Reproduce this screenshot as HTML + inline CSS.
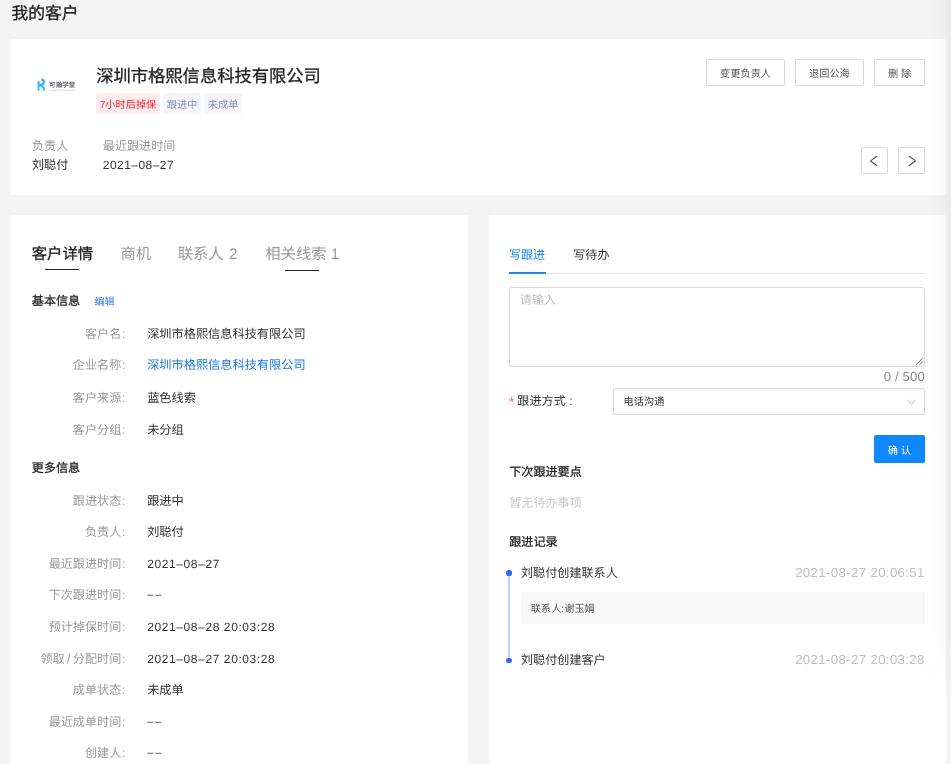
<!DOCTYPE html>
<html lang="zh-CN">
<head>
<meta charset="utf-8">
<title>我的客户</title>
<style>
*{box-sizing:border-box;margin:0;padding:0}
html,body{width:951px;height:764px;overflow:hidden;background:#f4f4f4}
body{position:relative;font-family:"Liberation Sans",sans-serif;color:#333;-webkit-font-smoothing:antialiased;text-rendering:geometricPrecision}
.a{position:absolute;white-space:nowrap}
.card{position:absolute;background:#fff;border-radius:2px}
/* generic text helper: t = vertically centred line */
.t{position:absolute;white-space:nowrap;height:20px;line-height:20px}
.btn{position:absolute;height:26.5px;top:59.2px;border:1px solid #d9d9d9;border-radius:2px;background:#fff;font-size:10.2px;color:#555;text-align:center;line-height:24.5px;padding-top:3.3px;overflow:hidden;white-space:nowrap}
.tag{position:absolute;top:93px;height:20.8px;line-height:20.8px;padding-top:3px;overflow:hidden;font-size:10.2px;border-radius:2px;text-align:center;white-space:nowrap}
.lab{position:absolute;right:825.7px;white-space:nowrap;font-size:12.1px;color:#999;height:20px;line-height:20px;text-align:right}
.val{position:absolute;left:147.2px;white-space:nowrap;font-size:12.2px;color:#333;height:20px;line-height:20px}
.num{font-size:12px;letter-spacing:.6px}
.dd{font-size:11px;letter-spacing:2px}
.ts{font-size:13.2px;color:#bfbfbf;letter-spacing:.38px}
.lab i{font-style:normal;margin-left:.7px}
</style>
</head>
<body>
<div id="root" style="position:absolute;left:0;top:0;width:951px;height:764px;will-change:transform">
<!-- page title -->
<div class="t" style="left:11.4px;top:3.8px;font-size:16.8px;color:#222;-webkit-text-stroke:.3px #222">我的客户</div>

<!-- header card -->
<div class="card" style="left:11px;top:39px;width:935px;height:156px"></div>


<!-- logo -->
<svg class="a" style="left:36px;top:77px" width="42" height="16" viewBox="0 0 42 16">
  <defs><linearGradient id="lg" gradientUnits="userSpaceOnUse" x1="0" y1="2" x2="0" y2="14"><stop offset="0" stop-color="#1a9cf3"/><stop offset="1" stop-color="#3acbff"/></linearGradient></defs>
  <path d="M2.55 4.3 V13.7" stroke="url(#lg)" stroke-width="2" fill="none"/>
  <path d="M5.6 2.3 C8.6 3.4 9.2 7.4 3.6 8.5 C7 8.7 8 10.8 8.1 13.7" stroke="url(#lg)" stroke-width="2.1" stroke-linecap="butt" stroke-linejoin="round" fill="none"/>
  <text x="13.1" y="9.7" font-family="Liberation Sans, sans-serif" font-size="6.4" font-weight="700" fill="#6c6c82" textLength="26" lengthAdjust="spacing">可瀚学堂</text>
  <text x="13.2" y="13.7" font-family="Liberation Sans, sans-serif" font-size="2.7" fill="#b8b8c2" textLength="25.6" lengthAdjust="spacingAndGlyphs">KEHAN ACADEMY</text>
</svg>

<!-- company name -->
<div class="t" style="left:96.2px;top:63.5px;height:24px;line-height:24px;font-size:17.3px;color:#222;-webkit-text-stroke:.3px #222">深圳市格熙信息科技有限公司</div>

<!-- tags -->
<div class="tag" style="left:96px;width:64px;background:#ffeced;color:#f5222d">7小时后掉保</div>
<div class="tag" style="left:163.2px;width:37.8px;background:#f3f5fb;color:#8791b4">跟进中</div>
<div class="tag" style="left:204.2px;width:37.8px;background:#f3f5fb;color:#8791b4">未成单</div>

<!-- meta -->
<div class="t" style="left:32px;top:135.8px;font-size:12.1px;color:#999">负责人</div>
<div class="t" style="left:102.8px;top:135.8px;font-size:12.1px;color:#999">最近跟进时间</div>
<div class="t" style="left:32px;top:154.9px;font-size:12.1px;color:#333">刘聪付</div>
<div class="t" style="left:102.8px;top:154.9px;font-size:12px;color:#333;letter-spacing:.45px">2021–08–27</div>

<!-- action buttons -->
<div class="btn" style="left:706.2px;width:78.8px">变更负责人</div>
<div class="btn" style="left:795.1px;width:68.6px">退回公海</div>
<div class="btn" style="left:874.2px;width:50.7px">删 除</div>

<!-- prev / next -->
<div class="a" style="left:861.2px;top:147.2px;width:26.5px;height:26.5px;border:1px solid #d9d9d9;border-radius:2px;background:#fff"></div>
<div class="a" style="left:898.2px;top:147.2px;width:26.5px;height:26.5px;border:1px solid #d9d9d9;border-radius:2px;background:#fff"></div>
<svg class="a" style="left:861px;top:147px" width="64" height="27" viewBox="0 0 64 27">
  <path d="M16.1 9 L9.6 13.9 L16.1 18.8" stroke="#555" stroke-width="1.15" fill="none"/>
  <path d="M47.9 9 L54.4 13.9 L47.9 18.8" stroke="#555" stroke-width="1.15" fill="none"/>
</svg>

<!-- left panel -->
<div class="card" style="left:11px;top:214.8px;width:457px;height:560px"></div>


<!-- left tabs -->
<div class="t" style="left:31.8px;top:244.7px;font-size:15.3px;color:#222;-webkit-text-stroke:.3px #222">客户详情</div>
<div class="t" style="left:120.4px;top:244.7px;font-size:15.3px;color:#999">商机</div>
<div class="t" style="left:177.7px;top:244.7px;font-size:15.3px;color:#999;word-spacing:1.2px">联系人 2</div>
<div class="t" style="left:265.3px;top:244.7px;font-size:15.3px;color:#999">相关线索 1</div>
<div class="a" style="left:45.2px;top:268.6px;width:33.7px;height:1.7px;background:#222"></div>
<div class="a" style="left:285px;top:269.6px;width:34px;height:1.7px;background:#222"></div>

<!-- basic info -->
<div class="t" style="left:31.8px;top:290.8px;font-size:12.1px;color:#222;-webkit-text-stroke:.28px #222">基本信息</div>
<div class="t" style="left:94.4px;top:292.6px;font-size:10.2px;color:#3b7af5">编辑</div>

<div class="lab" style="top:324px">客户名<i>:</i></div><div class="val" style="top:324px">深圳市格熙信息科技有限公司</div>
<div class="lab" style="top:354.9px">企业名称<i>:</i></div><div class="val" style="top:354.9px;color:#1b7ae8">深圳市格熙信息科技有限公司</div>
<div class="lab" style="top:387.9px">客户来源<i>:</i></div><div class="val" style="top:387.9px">蓝色线索</div>
<div class="lab" style="top:419.9px">客户分组<i>:</i></div><div class="val" style="top:419.9px">未分组</div>

<!-- more info -->
<div class="t" style="left:31.8px;top:458px;font-size:12.1px;color:#222;-webkit-text-stroke:.28px #222">更多信息</div>

<div class="lab" style="top:491px">跟进状态<i>:</i></div><div class="val" style="top:491px">跟进中</div>
<div class="lab" style="top:522.3px">负责人<i>:</i></div><div class="val" style="top:522.3px">刘聪付</div>
<div class="lab" style="top:554px">最近跟进时间<i>:</i></div><div class="val num" style="top:554px">2021–08–27</div>
<div class="lab" style="top:585.4px">下次跟进时间<i>:</i></div><div class="val num dd" style="top:585.4px">––</div>
<div class="lab" style="top:617px">预计掉保时间<i>:</i></div><div class="val num" style="top:617px">2021–08–28 20:03:28</div>
<div class="lab" style="top:648.6px">领取<span style="margin:0 2.4px">/</span>分配时间<i>:</i></div><div class="val num" style="top:648.6px">2021–08–27 20:03:28</div>
<div class="lab" style="top:680px">成单状态<i>:</i></div><div class="val" style="top:680px">未成单</div>
<div class="lab" style="top:711.8px">最近成单时间<i>:</i></div><div class="val num dd" style="top:711.8px">––</div>
<div class="lab" style="top:743.2px">创建人<i>:</i></div><div class="val num dd" style="top:743.2px">––</div>

<!-- right panel -->
<div class="card" style="left:488.7px;top:214.8px;width:457.3px;height:560px"></div>

<!-- right tabs -->
<div class="t" style="left:508.9px;top:244.5px;font-size:12.1px;color:#1487f5">写跟进</div>
<div class="t" style="left:573.2px;top:244.5px;font-size:12.1px;color:#333">写待办</div>
<div class="a" style="left:509px;top:273px;width:416px;height:1px;background:#e8e8e8"></div>
<div class="a" style="left:509px;top:271.7px;width:37.2px;height:2.2px;background:#1487f5"></div>

<!-- textarea -->
<div class="a" style="left:509px;top:287.2px;width:416px;height:79.6px;border:1px solid #d9d9d9;border-radius:3px;background:#fff"></div>
<div class="t" style="left:519.7px;top:290.2px;font-size:12.1px;color:#bfbfbf">请输入</div>
<svg class="a" style="left:912px;top:354px" width="12" height="12" viewBox="0 0 12 12">
  <path d="M4.2 10.6 L10.6 4.2 M7.6 10.6 L10.6 7.6" stroke="#555" stroke-width="0.9" fill="none"/>
</svg>
<div class="t" style="right:26.2px;top:367.4px;font-size:13.2px;color:#8c8c8c;letter-spacing:.1px">0 / 500</div>

<!-- follow type -->
<div class="t" style="left:508.7px;top:392.6px;font-size:14.5px;color:#ff6a6a">*</div>
<div class="t" style="left:517.3px;top:391px;font-size:12.1px;color:#333">跟进方式<span style="margin-left:3.6px">:</span></div>
<div class="a" style="left:613px;top:388.4px;width:312px;height:27px;border:1px solid #d9d9d9;border-radius:2px;background:#fff"></div>
<div class="t" style="left:623.6px;top:393.1px;font-size:10.2px;color:#333">电话沟通</div>
<svg class="a" style="left:905px;top:397px" width="13" height="9" viewBox="0 0 13 9">
  <path d="M2.4 2.6 L6.5 7.4 L10.6 2.6" stroke="#bfbfbf" stroke-width="1" fill="none"/>
</svg>

<!-- confirm -->
<div class="a" style="left:874px;top:435.1px;width:50.8px;height:27.6px;border-radius:2px;background:#0f88ff;color:#fff;font-size:10.2px;line-height:27.6px;padding-top:2.5px;overflow:hidden;text-align:center">确 认</div>

<!-- next follow-up -->
<div class="t" style="left:509.2px;top:461.7px;font-size:12.1px;color:#222;-webkit-text-stroke:.28px #222">下次跟进要点</div>
<div class="t" style="left:509.2px;top:492.8px;font-size:12.1px;color:#c8c8c8">暂无待办事项</div>

<!-- records -->
<div class="t" style="left:509.2px;top:532px;font-size:12.1px;color:#222;-webkit-text-stroke:.28px #222">跟进记录</div>
<div class="a" style="left:508.4px;top:573px;width:1.4px;height:88px;background:#bcd0ff"></div>
<div class="a" style="left:506.3px;top:570.4px;width:5.7px;height:5.7px;border-radius:50%;background:#2b6cf6"></div>
<div class="a" style="left:506.3px;top:657.6px;width:5.7px;height:5.7px;border-radius:50%;background:#2b6cf6"></div>
<div class="t" style="left:521px;top:562.8px;font-size:12.1px;color:#333">刘聪付创建联系人</div>
<div class="t ts" style="right:26.2px;top:562.6px">2021-08-27 20:06:51</div>
<div class="a" style="left:521px;top:592.1px;width:404px;height:31.6px;border-radius:3px;background:#f8f8f8"></div>
<div class="t" style="left:530.8px;top:600.1px;font-size:10.2px;color:#555">联系人:谢玉娟</div>
<div class="t" style="left:521px;top:650px;font-size:12.1px;color:#333">刘聪付创建客户</div>
<div class="t ts" style="right:26.2px;top:649.6px">2021-08-27 20:03:28</div>

<!-- right-edge shadow -->
<div class="a" style="left:925px;top:0;width:26px;height:700px;background:linear-gradient(to right,rgba(0,0,0,0) 0,rgba(0,0,0,.008) 8px,rgba(0,0,0,.022) 20.5px,rgba(0,0,0,.034) 21.5px,rgba(0,0,0,.034) 26px);-webkit-mask-image:linear-gradient(to bottom,#000 0,#000 88%,transparent 100%);mask-image:linear-gradient(to bottom,#000 0,#000 88%,transparent 100%)"></div>
</div>
</body>
</html>
